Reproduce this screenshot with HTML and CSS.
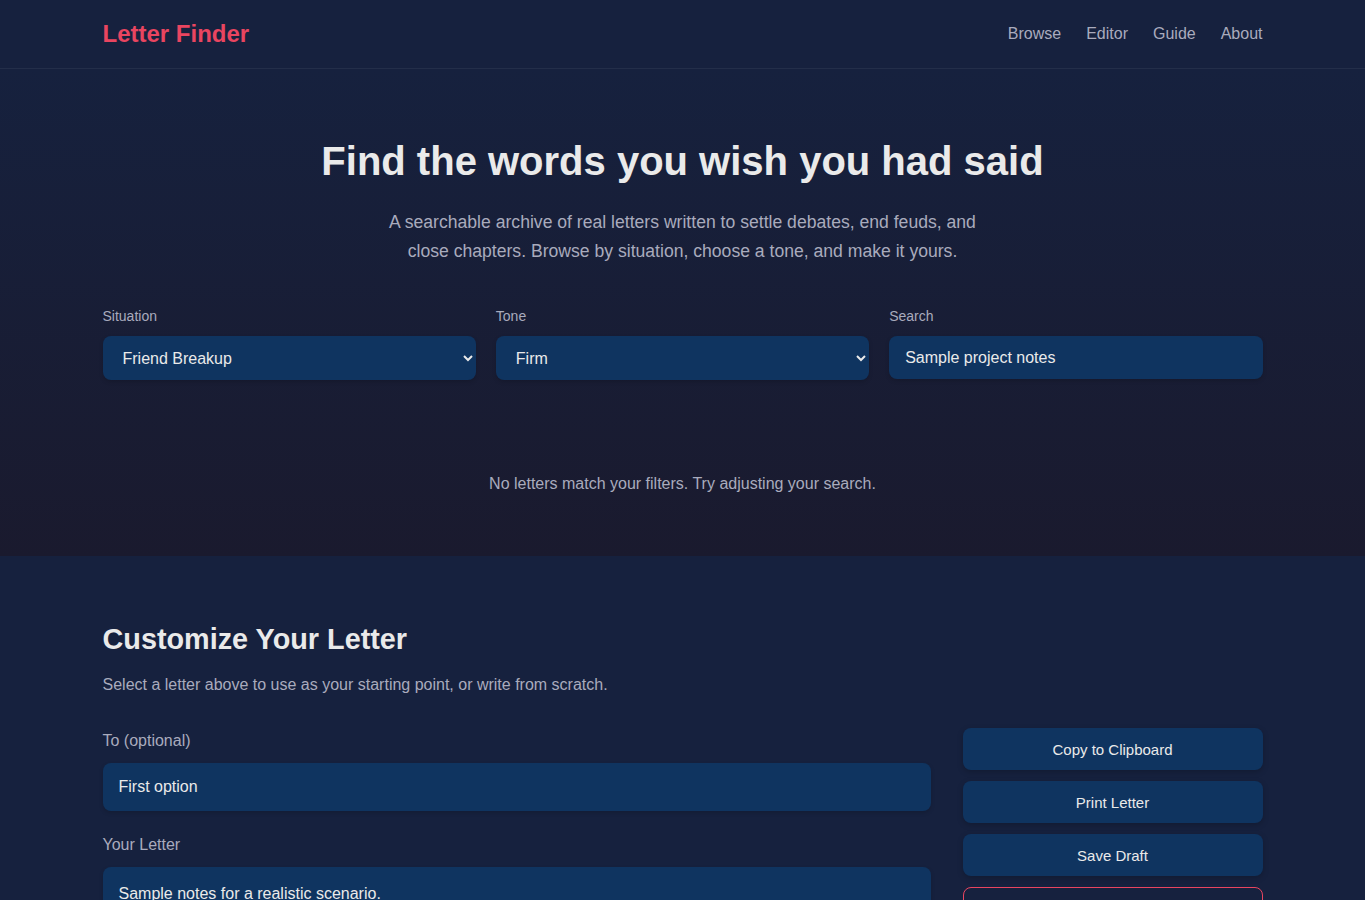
FILE: index.html
```html
<!DOCTYPE html>
<html lang="en">
<head>
<meta charset="utf-8">
<title>Letter Finder</title>
<link rel="stylesheet" href="styles.css">
</head>
<body>
<header class="site-header">
  <div class="container header-inner">
    <a class="logo" href="#">Letter Finder</a>
    <nav class="nav">
      <a href="#">Browse</a>
      <a href="#">Editor</a>
      <a href="#">Guide</a>
      <a href="#">About</a>
    </nav>
  </div>
</header>

<section class="hero">
  <div class="container">
    <h1 class="hero-title">Find the words you wish you had said</h1>
    <p class="hero-sub">A searchable archive of real letters written to settle debates, end feuds, and close chapters. Browse by situation, choose a tone, and make it yours.</p>

    <div class="filters">
      <div class="field">
        <label class="field-label" for="situation">Situation</label>
        <select id="situation" class="control select">
          <option>Friend Breakup</option>
          <option>Family Feud</option>
        </select>
      </div>
      <div class="field">
        <label class="field-label" for="tone">Tone</label>
        <select id="tone" class="control select">
          <option>Firm</option>
          <option>Gentle</option>
        </select>
      </div>
      <div class="field">
        <label class="field-label" for="search">Search</label>
        <input id="search" class="control input" type="text" value="Sample project notes">
      </div>
    </div>

    <p class="empty">No letters match your filters. Try adjusting your search.</p>
  </div>
</section>

<section class="editor">
  <div class="container">
    <h2 class="editor-title">Customize Your Letter</h2>
    <p class="editor-sub">Select a letter above to use as your starting point, or write from scratch.</p>

    <div class="editor-grid">
      <div class="editor-form">
        <div class="form-group">
          <label class="form-label" for="to">To (optional)</label>
          <input id="to" class="form-input" type="text" value="First option">
        </div>
        <div class="form-group">
          <label class="form-label" for="body">Your Letter</label>
          <textarea id="body" class="form-textarea" rows="10">Sample notes for a realistic scenario.</textarea>
        </div>
      </div>
      <div class="actions">
        <button class="btn">Copy to Clipboard</button>
        <button class="btn">Print Letter</button>
        <button class="btn">Save Draft</button>
        <button class="btn btn-outline">Start Over</button>
      </div>
    </div>
  </div>
</section>
</body>
</html>
```

FILE: styles.css
```css
* {
  box-sizing: border-box;
}

html, body {
  margin: 0;
  padding: 0;
}

body {
  background: #16213e;
  color: #eaeaea;
  font-family: "Liberation Sans", Arial, sans-serif;
}

.container {
  max-width: 1160px;
  margin: 0 auto;
}

/* Header */
.site-header {
  background: #16213e;
  border-bottom: 1px solid rgba(255, 255, 255, 0.06);
}

.header-inner {
  height: 68px;
  display: flex;
  align-items: center;
  justify-content: space-between;
}

.logo {
  color: #e94560;
  font-size: 24px;
  font-weight: 700;
  text-decoration: none;
}

.nav {
  display: flex;
  gap: 25px;
}

.nav a {
  color: #a9abbd;
  font-size: 16px;
  text-decoration: none;
}

/* Hero */
.hero {
  background: linear-gradient(180deg, #16213e 0%, #1a1a2e 100%);
  padding: 68px 0 63px;
}

.hero-title {
  margin: 0;
  text-align: center;
  font-size: 40px;
  line-height: 48px;
  font-weight: 700;
  color: #eaeaea;
}

.hero-sub {
  margin: 23px auto 0;
  max-width: 600px;
  text-align: center;
  font-size: 17.6px;
  line-height: 29px;
  color: #a9abbd;
}

.filters {
  margin-top: 40px;
  display: grid;
  grid-template-columns: repeat(3, 1fr);
  gap: 20px;
}

.field-label {
  display: block;
  font-size: 14px;
  line-height: 20px;
  color: #a9abbd;
  margin-bottom: 10px;
}

.control {
  width: 100%;
  background: #0f3460;
  color: #eaeaea;
  border: none;
  border-radius: 8px;
  font-family: inherit;
  font-size: 16px;
  padding: 0 16px;
  outline: none;
  box-shadow: 0 2px 4px rgba(0, 0, 0, 0.15);
}

.select {
  height: 44px;
  padding: 0 12px 0 16px;
}

.input {
  height: 43px;
}

.empty {
  margin: 95px 0 0;
  text-align: center;
  font-size: 16px;
  line-height: 18px;
  color: #a9abbd;
}

/* Editor */
.editor {
  background: #16213e;
  padding: 66px 0 40px;
}

.editor-title {
  margin: 0;
  font-size: 28.8px;
  line-height: 34px;
  font-weight: 700;
  color: #eaeaea;
}

.editor-sub {
  margin: 17px 0 0;
  font-size: 16px;
  line-height: 24px;
  color: #a9abbd;
}

.editor-grid {
  margin-top: 31px;
  display: grid;
  grid-template-columns: 1fr 300px;
  gap: 32px;
  align-items: start;
}

.editor-form {
  display: flex;
  flex-direction: column;
  gap: 21px;
}

.form-label {
  display: block;
  font-size: 16px;
  line-height: 26px;
  color: #a9abbd;
  margin-bottom: 9px;
}

.form-input,
.form-textarea {
  width: 100%;
  display: block;
  background: #0f3460;
  color: #eaeaea;
  border: none;
  border-radius: 8px;
  font-family: inherit;
  font-size: 16px;
  padding: 0 16px;
  outline: none;
  box-shadow: 0 2px 4px rgba(0, 0, 0, 0.15);
}

.form-input {
  height: 48px;
}

.form-textarea {
  padding: 17px 16px 16px;
  line-height: 20px;
  min-height: 240px;
  resize: vertical;
}

.actions {
  display: flex;
  flex-direction: column;
  gap: 11px;
}

.btn {
  height: 42px;
  width: 100%;
  background: #0f3460;
  color: #eaeaea;
  border: none;
  border-radius: 8px;
  font-family: inherit;
  font-size: 15px;
  cursor: pointer;
  box-shadow: 0 2px 6px rgba(0, 0, 0, 0.2);
}

.btn-outline {
  background: transparent;
  border: 1px solid #e94560;
  box-shadow: none;
}
```
